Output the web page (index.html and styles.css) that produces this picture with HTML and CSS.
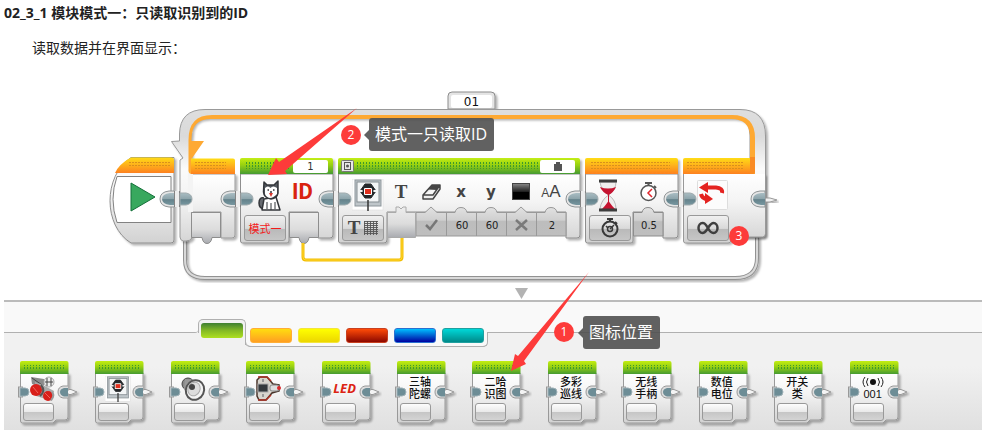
FILE: index.html
```html
<!DOCTYPE html>
<html lang="zh-CN">
<head>
<meta charset="UTF-8">
<meta name="viewport" content="width=device-width, initial-scale=1.0">
<title>模块模式一</title>
<link rel="stylesheet" href="styles.css">
</head>
<body>

<!-- Shared shapes -->
<svg class="defs" width="0" height="0" aria-hidden="true">
  <defs>
    <linearGradient id="green" x1="0" y1="0" x2="0" y2="1">
      <stop offset="0" stop-color="#c4ee12"/><stop offset=".45" stop-color="#96d011"/><stop offset="1" stop-color="#459a32"/>
    </linearGradient>
    <linearGradient id="orange" x1="0" y1="0" x2="0" y2="1">
      <stop offset="0" stop-color="#ffdc16"/><stop offset="1" stop-color="#fd8120"/>
    </linearGradient>
    <linearGradient id="body" x1="0" y1="0" x2="0" y2="1">
      <stop offset="0" stop-color="#ffffff"/><stop offset=".4" stop-color="#f4f4f4"/><stop offset="1" stop-color="#d2d2d2"/>
    </linearGradient>
    <linearGradient id="frame" gradientUnits="userSpaceOnUse" x1="0" y1="110" x2="0" y2="241">
      <stop offset="0" stop-color="#dedede"/><stop offset=".2" stop-color="#dadada"/><stop offset=".45" stop-color="#fbfbfb"/><stop offset=".7" stop-color="#f2f2f2"/><stop offset="1" stop-color="#d6d6d6"/>
    </linearGradient>
    <linearGradient id="slot" x1="0" y1="0" x2="0" y2="1">
      <stop offset="0" stop-color="#ededed"/><stop offset=".55" stop-color="#dcdcdc"/><stop offset="1" stop-color="#a9abb0"/>
    </linearGradient>
    <linearGradient id="field" x1="0" y1="0" x2="0" y2="1">
      <stop offset="0" stop-color="#e2e2e2"/><stop offset=".45" stop-color="#cfcfcf"/><stop offset=".5" stop-color="#bdbdbd"/><stop offset="1" stop-color="#bebebe"/>
    </linearGradient>
    <linearGradient id="teal" x1="0" y1="0" x2="0" y2="1">
      <stop offset="0" stop-color="#a9bdc3"/><stop offset=".5" stop-color="#8ca3aa"/><stop offset=".55" stop-color="#64828b"/><stop offset="1" stop-color="#7797a0"/>
    </linearGradient>
    <linearGradient id="dark" x1="0" y1="0" x2="0" y2="1">
      <stop offset="0" stop-color="#8a8a8a"/><stop offset=".5" stop-color="#222"/><stop offset=".55" stop-color="#000"/><stop offset="1" stop-color="#000"/>
    </linearGradient>
    <pattern id="dots-green" width="3" height="3" patternUnits="userSpaceOnUse"><rect width="1" height="2" fill="#3e9a2c"/></pattern>
    <pattern id="dots-orange" width="3" height="3" patternUnits="userSpaceOnUse"><rect width="2" height="1" fill="#d9901c"/></pattern>
    <filter id="shadow" x="-5%" y="-5%" width="115%" height="115%">
      <feDropShadow dx="2" dy="2" stdDeviation="1" flood-color="#000" flood-opacity=".3"/>
    </filter>

    <symbol id="joint" viewBox="0 0 34 18">
      <path d="M15 1H10Q1 2 1 9Q1 16 10 17H15" fill="#e6e6e6" stroke="#8f9496"/>
      <path d="M15 3H11Q3 4 3 9Q3 14 11 15H15Z" fill="url(#teal)"/>
      <rect x="15" y="1" width="5" height="16" fill="#ededed"/>
      <path d="M15.500 1V17M20.500 1V17" stroke="#838383"/>
      <path d="M21 3H27Q33 4 33 9Q33 14 27 15H21Z" fill="url(#teal)" stroke="#a0abae"/>
    </symbol>

    <symbol id="screen" viewBox="0 0 32 32">
      <rect x="0" y="0" width="31" height="31" fill="#fff" stroke="#ddd" stroke-width=".6"/>
      <rect x="3" y="1" width="26" height="26" fill="#bfc6ca" stroke="#8d969b"/>
      <rect x="5" y="3" width="22" height="20" fill="#f3f5f6" stroke="#858d92"/>
      <path d="M8 12L13 5H19L24 12L19 19H13Z" fill="#25282b" stroke="#25282b" stroke-linejoin="round"/>
      <path d="M7 12H25" stroke="#f3f5f6" stroke-width="2"/>
      <circle cx="16" cy="12" r="5.500" fill="#25282b"/>
      <rect x="12" y="9" width="8" height="7" rx="1" fill="#fff"/>
      <rect x="13" y="10" width="6" height="5" fill="#e0301e"/>
      <path d="M16 21V32" stroke="#333" stroke-width="1.500"/>
    </symbol>

    <symbol id="tile" viewBox="0 0 62 66">
      <g filter="url(#shadow)">
        <path d="M2.500 12V60q0 2 2 2H35l3-3H47q3 0 3-3V12Z" fill="url(#body)" stroke="#999"/>
        <path d="M48 31l3-2.500H53L59 31L53 33.500H51Z" fill="#f4f4f4" stroke="#999"/>
      </g>
      <path d="M2 13V2q0-2 2-2H48.500q2 0 2 2V13Z" fill="url(#green)"/>
      <rect x="6" y="4" width="40" height="5" fill="url(#dots-green)"/>
      <rect x=".5" y="26" width="4" height="10" fill="#ddd" stroke="#999"/>
      <path d="M2 27H7Q11 27 11 31Q11 35 7 35H2Z" fill="#6d8d96" stroke="#9fb1b7"/>
      <path d="M50 25H45Q40 26 40 31Q40 36 45 37H50" fill="#ddd" stroke="#999"/>
      <path d="M50 27H46Q42 28 42 31Q42 34 46 35.500H50Z" fill="#6d8d96"/>
    </symbol>
  </defs>
</svg>

<h4>02_3_1 模块模式一：只读取识别到的ID</h4>
<p class="intro">读取数据并在界面显示：</p>

<figure class="editor">

  <!-- Program canvas -->
  <div class="program">
    <svg class="drawing" viewBox="100 80 690 220" aria-hidden="true">
      <!-- loop frame -->
      <g filter="url(#shadow)">
        <path d="M185 238V260Q185 278 205 278H735Q757 278 757 258V236" fill="none" stroke="#929292" stroke-width="4"/>
      </g>
      <path d="M185 238V260Q185 278 205 278H735Q757 278 757 258V236" fill="none" stroke="#d9d9d9" stroke-width="2"/>
      <g filter="url(#shadow)">
        <path d="M448 109V96q0-4 4-4H491q4 0 4 4V109Z" fill="#e4e4e4" stroke="#8c8c8c"/>
        <path d="M179.500 141V134Q180 109.500 205 109.500H740Q765.500 109.500 765.500 136V234q0 3-3 3H728V174H750V135Q750 118 734 118H208Q191 118 191 137V212H192V238Q190 241 186 241H183Q180 240 180 237V160L183 158L171.500 141.500Z" fill="url(#frame)" stroke="#999"/>
      </g>
      <path d="M191 174H235V235q0 3-3 3H221V212H191Z" fill="url(#body)" stroke="#999" filter="url(#shadow)"/>
      <path d="M188 169V212H193V169Z" fill="#f4f4f4"/>
      <path d="M188.500 171V140Q188.500 115 212 115H732Q755 115 755 138V174H750V137Q750 119 731 119H211Q191.500 119 191.500 139V141H204L191.500 159V174Q189 174 188.500 171Z" fill="#fea933"/>
      <path d="M191 174V158.500H233q2 0 2 2V174Z" fill="url(#orange)"/>
      <rect x="195" y="162" width="31" height="8" fill="url(#dots-orange)"/>

      <!-- start block -->
      <path d="M174 157.500H131C103 176 103 226 131 243H171q3 0 3-3Z" fill="url(#body)" stroke="#8e8e8e" filter="url(#shadow)"/>
      <path d="M174 173V160q0-2.500-3-2.500H131Q119 164 115 173Z" fill="url(#orange)"/>
      <path d="M117 176.500H171V222.500H117Q109 199 117 176.500Z" fill="#fff" stroke="#828282"/>
      <rect x="128" y="161" width="42" height="7" fill="url(#dots-orange)"/>
      <path d="M131 183L155 197L131 211Z" fill="#38a85e" stroke="#14703a"/>

      <!-- module block -->
      <g filter="url(#shadow)">
        <path d="M240.500 174V241q0 2 2 2H287q2 0 2-2V212H318V238H330q3 0 3-3V174Z" fill="url(#body)" stroke="#8e8e8e"/>
        <path d="M240 174V160q0-2 2-2H331q2 0 2 2V174Z" fill="url(#green)"/>
      </g>
      <rect x="244" y="162" width="47" height="7" fill="url(#dots-green)"/>
      <path d="M289.500 212.500H318.500V237.500H309q-1 6-5 6t-5-6H289.500Z" fill="url(#slot)" stroke="#8d8d8d"/>
      <path d="M191.500 212.500H220.500V237.500H212q-1 6-5 6t-5-6H191.500Z" fill="url(#slot)" stroke="#8d8d8d"/>
      <!-- husky -->
      <g stroke="#33363a" stroke-linejoin="round">
        <path d="M264 198q-5-1-5 5t6 6" fill="#666a70" stroke-width="1.500"/>
        <path d="M264 199L262 210H280L276 197Z" fill="#fff" stroke-width="1.500"/>
        <path d="M264 182L267 185H274L278 181V193Q277 198 271 199Q264 198 263.500 192Z" fill="#555a61" stroke-width="1.500"/>
        <path d="M265 188Q268 185 270.500 188Q273 185 277 188V194Q273 198 270 198Q266 197 265 194Z" fill="#fff" stroke="none"/>
        <path d="M269 193H273L271 197Z" fill="#d93a32" stroke="none"/>
        <path d="M267 202V209M271 203V210M275 202V209" fill="none"/>
        <path d="M267.500 190h1.500M273 190h1.500M270 192h2" stroke-width="1.500"/>
      </g>

      <!-- display block -->
      <g filter="url(#shadow)">
        <path d="M338.500 174V241q0 2 2 2H384q3 0 3-3V212H566V238H577q3 0 3-3V174Z" fill="url(#body)" stroke="#8e8e8e"/>
        <path d="M338 174V160q0-2 2-2H578q2 0 2 2V174Z" fill="url(#green)"/>
      </g>
      <rect x="356" y="162" width="182" height="7" fill="url(#dots-green)"/>
      <rect x="341.500" y="160.500" width="12" height="11" rx="1" fill="#e8e8e8" stroke="#777"/>
      <rect x="344.500" y="162.500" width="6" height="7" fill="none" stroke="#555"/>
      <circle cx="347.500" cy="166" r="1.500" fill="#555"/>
      <path d="M416 212.500H425L431 207L437 212.500H455Q456 207.500 461 207.500T467 212.500H485Q486 207.500 491 207.500T497 212.500H515L521 207L527 212.500H545Q546 207.500 551 207.500T557 212.500H566V236H416Z" fill="url(#field)" stroke="#999"/>
      <path d="M446.500 213V236M476.500 213V236M506.500 213V236M536.500 213V236" stroke="#999"/>
      <path d="M387.500 212.500H396V207H399L401 209L403 207H406V212.500H415.500V237.500H387.500Z" fill="url(#slot)" stroke="#aaa"/>
      <use href="#screen" x="352" y="179" width="32" height="32"/>
      <path d="M423 195L432 185H440L433 195ZM423 195V199H433L440 189V185" fill="#eee" stroke="#454545" stroke-width="1.500" stroke-linejoin="round"/>
      <path d="M428 189.500L432 185H440L436.500 190Z" fill="#454545"/>
      <rect x="512.500" y="183.500" width="17" height="16" fill="url(#dark)" stroke="#444"/>
      <path d="M426 225L430 229L437 220" fill="none" stroke="#777" stroke-width="2.500"/>
      <path d="M516 220L527 230M527 220L516 230" fill="none" stroke="#7a7a7a" stroke-width="2.500"/>

      <!-- wait block -->
      <g filter="url(#shadow)">
        <path d="M585.500 174V241q0 2 2 2H631q2 0 2-2V212H663V238H675q3 0 3-3V174Z" fill="url(#body)" stroke="#8e8e8e"/>
        <path d="M585 174V160q0-2 2-2H676q2 0 2 2V174Z" fill="url(#orange)"/>
      </g>
      <rect x="590" y="162" width="80" height="7" fill="url(#dots-orange)"/>
      <path d="M633.500 212.500H642Q643 207.500 648 207.500T654 212.500H663V236H633.500Z" fill="url(#field)" stroke="#8d8d8d"/>
      <path d="M600 182H616Q616 190 608.500 195Q601 190 600 182ZM608.500 195Q616 200 616 209H600Q601 200 608.500 195Z" fill="#f0eeee" stroke="#bbb"/>
      <path d="M600 187Q608 190 616 187Q614 192 608.500 195Q602 192 600 187ZM602 209Q605 206 608.500 201Q612 206 615 209Z" fill="#c51431"/>
      <path d="M608.500 194V202" stroke="#c51431"/>
      <path d="M599 181H617M599 210H617" stroke="#3d3d3d" stroke-width="3"/>
      <circle cx="648.500" cy="193" r="7.500" fill="#fff" stroke="#555" stroke-width="1.500"/>
      <path d="M645 183H652M648.500 183V186M654 186L656 188" stroke="#555" stroke-width="2"/>
      <path d="M652 189L648 193L652 197" fill="none" stroke="#e0252c" stroke-width="1.500"/>

      <!-- loop end block -->
      <path d="M683.500 174H765V234q0 3-3 3H731V240q0 3-3 3H685.500q-2 0-2-2Z" fill="url(#body)" filter="url(#shadow)"/>
      <path d="M683.500 174V241q0 2 2 2H728q3 0 3-3V237H762.500q3 0 3-3V135" fill="none" stroke="#999"/>
      <path d="M683 174V160q0-2 2-2H750V174Z" fill="url(#orange)"/>
      <path d="M750 157H755V172q0 2-2 2H750Z" fill="#f98b24"/>
      <rect x="687" y="162" width="57" height="7" fill="url(#dots-orange)"/>
      <rect x="697.500" y="180.500" width="30" height="29" rx="1" fill="#fcfcfc" stroke="#ddd"/>
      <path d="M706 187.500H716Q723 188 722 193" fill="none" stroke="#e42320" stroke-width="4"/>
      <path d="M699 187.500L708 182V193Z" fill="#e42320"/>
      <path d="M701 194Q702 199 708 199" fill="none" stroke="#e42320" stroke-width="4"/>
      <path d="M713 199L705 193V204Z" fill="#e42320"/>
      <path d="M765 198H770L777 200L770 202H765Z" fill="#f1f1f1" stroke="#999" filter="url(#shadow)"/>

      <!-- joints between blocks -->
      <use href="#joint" x="159" y="190" width="34" height="18"/>
      <use href="#joint" x="220" y="190" width="34" height="18"/>
      <use href="#joint" x="318" y="190" width="34" height="18"/>
      <use href="#joint" x="565" y="190" width="34" height="18"/>
      <use href="#joint" x="663" y="190" width="34" height="18"/>
      <path d="M765 191H760Q751 192 751 199Q751 206 760 207H765Z" fill="#e6e6e6" stroke="#8f9496"/>
      <path d="M765 193H761Q753 194 753 199Q753 204 761 205H765Z" fill="url(#teal)"/>

      <!-- data wire -->
      <path d="M303 243V257Q303 260 306 260H399Q402 260 402 257V238" fill="none" stroke="#f2bd00" stroke-width="3"/>
      <path d="M303 243V257Q303 260 306 260H399Q402 260 402 257V238" fill="none" stroke="#ffd530"/>
    </svg>

    <input class="loop-name" type="text" value="01" aria-label="循环名称">

    <div class="block module">
      <div class="head"><input class="port" type="text" value="1" aria-label="端口"></div>
      <div class="labels"><b class="id">ID</b></div>
      <div class="params">
        <button type="button" class="mode red">模式一</button>
      </div>
    </div>

    <div class="block display">
      <div class="head">
        <button type="button" class="port" aria-label="文本">
          <svg width="10" height="9" viewBox="0 0 10 9"><path d="M1 2H3V0H7V2H9V9H1Z" fill="#555"/></svg>
        </button>
      </div>
      <div class="labels">
        <b class="serif">T</b><b></b><b>x</b><b>y</b><b></b><span><small>A</small>A</span>
      </div>
      <div class="params">
        <button type="button" class="mode" aria-label="文本网格">
          <b>T</b>
          <svg width="14" height="14" viewBox="0 0 14 14"><path d="M0 .5H14M0 2.500H14M0 4.500H14M0 6.500H14M0 8.500H14M0 10.500H14M0 12.500H14M.5 0V14M3.500 0V14M6.500 0V14M9.500 0V14M12.500 0V14" stroke="#555" stroke-width=".9"/></svg>
        </button>
        <input class="x" type="text" value="60" aria-label="x">
        <input type="text" value="60" aria-label="y">
        <input class="size" type="text" value="2" aria-label="字号">
      </div>
    </div>

    <div class="block wait">
      <div class="head"></div>
      <div class="labels"></div>
      <div class="params">
        <button type="button" class="mode" aria-label="时间">
          <svg width="20" height="22" viewBox="0 0 20 22" fill="none" stroke="#383838">
            <circle cx="10" cy="12" r="7.500" stroke-width="2"/><path d="M7 2H13M10 2V5M15 5L17 7" stroke-width="2"/><circle cx="10" cy="12" r="2.500" stroke-width="1.500"/><path d="M10 12L14 8M6 9L8 11" stroke-width="1.500"/>
          </svg>
        </button>
        <input type="text" value="0.5" aria-label="秒">
      </div>
    </div>

    <div class="block loop-end">
      <div class="head"></div>
      <div class="labels"></div>
      <div class="params">
        <button type="button" class="mode" aria-label="无限">
          <svg width="22" height="14" viewBox="0 0 22 14"><path d="M11 7C8 2 7 2 5.500 2A4 5 0 0 0 5.500 12C8 12 9 10 11 7S14 2 16.500 2A4 5 0 0 1 16.500 12C14 12 13 11 11 7Z" fill="none" stroke="#3f3f3f" stroke-width="2.500"/></svg>
        </button>
      </div>
    </div>
  </div>

  <!-- Block palette -->
  <div class="palette">
    <div class="tabs">
      <div class="rail"></div>
      <button type="button" class="tab active" aria-label="动作"></button>
      <div class="tab-group">
        <button type="button" class="tab flow" aria-label="流程"></button>
        <button type="button" class="tab sensor" aria-label="传感器"></button>
        <button type="button" class="tab data" aria-label="数据"></button>
        <button type="button" class="tab advanced" aria-label="高级"></button>
        <button type="button" class="tab custom" aria-label="我的模块"></button>
      </div>
      <div class="rail rest"></div>
    </div>

    <ul class="tiles">
      <li class="tile">
        <svg class="frame"><use href="#tile"/></svg>
        <svg class="icon" viewBox="0 0 26 26">
          <path d="M1 1L14 3V12L2 8Z" fill="#8b8b8b"/><path d="M2 2L12 9" stroke="#444"/>
          <circle cx="19" cy="6" r="5" fill="#eee" stroke="#aaa"/><path d="M17 2V10M21 2V10M15 6H23" stroke="#444"/>
          <path d="M5 6L13 9L24 15L22 25L6 20Z" fill="#aaa"/>
          <circle cx="6" cy="14" r="6" fill="#d81f1a"/><path d="M11 9Q16 15 10 20" stroke="#555" stroke-width="2" fill="none"/>
          <circle cx="18" cy="20" r="5" fill="#d81f1a"/><path d="M22 16Q25 20 21 24" stroke="#999" stroke-width="2" fill="none"/>
          <path d="M3 11L8 17M15 17L20 22" stroke="#f2655c"/>
        </svg>
        <button type="button" class="mode" aria-label="中型电机"></button>
      </li>
      <li class="tile">
        <svg class="frame"><use href="#tile"/></svg>
        <svg class="icon" viewBox="0 0 26 26"><use href="#screen" width="26" height="26"/></svg>
        <button type="button" class="mode" aria-label="显示"></button>
      </li>
      <li class="tile">
        <svg class="frame"><use href="#tile"/></svg>
        <svg class="icon" viewBox="0 0 26 26">
          <circle cx="7" cy="8" r="6" fill="#888" stroke="#444"/><path d="M4 3L17 4L11 22L3 13Z" fill="#999"/>
          <ellipse cx="14" cy="14" rx="9" ry="10" transform="rotate(25 14 14)" fill="#f4f4f4" stroke="#555" stroke-width="2"/>
          <ellipse cx="13" cy="13" rx="6" ry="7" transform="rotate(25 13 13)" fill="#ddd" stroke="#aaa"/><circle cx="11" cy="11" r="3" fill="#444"/>
        </svg>
        <button type="button" class="mode" aria-label="声音"></button>
      </li>
      <li class="tile">
        <svg class="frame"><use href="#tile"/></svg>
        <svg class="icon" viewBox="0 0 26 26">
          <path d="M4 1H11L17 8L23 9V15L16 17L10 24H3L1 20V4Z" fill="#d8d5ce" stroke="#49362c" stroke-width="1.500"/>
          <path d="M2 1H11L15 5M2 24H10L15 19" fill="none" stroke="#ad3225" stroke-width="1.500"/>
          <rect x="2" y="8" width="10" height="8" fill="#353a3e" stroke="#aaa"/><path d="M7 3V6M7 18V21" stroke="#999" stroke-width="2"/>
          <rect x="14" y="9" width="9" height="6" rx="2" fill="#ddd" stroke="#888"/><circle cx="23" cy="12" r="2" fill="#d72b2d"/>
        </svg>
        <button type="button" class="mode" aria-label="程序块状态灯"></button>
      </li>
      <li class="tile">
        <svg class="frame"><use href="#tile"/></svg>
        <span class="label led">LED</span>
        <button type="button" class="mode" aria-label="LED"></button>
      </li>
      <li class="tile">
        <svg class="frame"><use href="#tile"/></svg>
        <span class="label">三轴<br>陀螺</span>
        <button type="button" class="mode" aria-label="三轴陀螺"></button>
      </li>
      <li class="tile">
        <svg class="frame"><use href="#tile"/></svg>
        <span class="label">二哈<br>识图</span>
        <button type="button" class="mode" aria-label="二哈识图"></button>
      </li>
      <li class="tile">
        <svg class="frame"><use href="#tile"/></svg>
        <span class="label">多彩<br>巡线</span>
        <button type="button" class="mode" aria-label="多彩巡线"></button>
      </li>
      <li class="tile">
        <svg class="frame"><use href="#tile"/></svg>
        <span class="label">无线<br>手柄</span>
        <button type="button" class="mode" aria-label="无线手柄"></button>
      </li>
      <li class="tile">
        <svg class="frame"><use href="#tile"/></svg>
        <span class="label">数值<br>电位</span>
        <button type="button" class="mode" aria-label="数值电位"></button>
      </li>
      <li class="tile">
        <svg class="frame"><use href="#tile"/></svg>
        <span class="label">开关<br>类</span>
        <button type="button" class="mode" aria-label="开关类"></button>
      </li>
      <li class="tile">
        <svg class="frame"><use href="#tile"/></svg>
        <span class="label">
          <svg width="22" height="12" viewBox="0 0 22 12"><circle cx="11" cy="6" r="3" fill="#111"/><path d="M6 2Q3 6 6 10M3 1Q-1 6 3 11M16 2Q19 6 16 10M19 1Q23 6 19 11" fill="none" stroke="#222"/></svg>
          001
        </span>
        <button type="button" class="mode" aria-label="无线 001"></button>
      </li>
    </ul>
  </div>

  <!-- Annotations -->
  <svg class="arrows" viewBox="100 80 690 300" aria-hidden="true">
    <path d="M515 288H528L521.500 299Z" fill="#b3b3b3"/>
    <path d="M357 108L285 171L287 174L268 175L276 158L279 162Z" fill="#fd3b3a"/>
    <path d="M589 272L524 361L526 364L511 371L515 354L518 356Z" fill="#fd3b3a"/>
  </svg>
  <span class="badge badge-2">2</span>
  <span class="note note-2">模式一只读取ID</span>
  <span class="badge badge-1">1</span>
  <span class="note note-1">图标位置</span>
  <span class="badge badge-3">3</span>
</figure>

</body>
</html>
```
FILE: styles.css
```css
* {
  box-sizing: border-box;
}

body {
  margin: 0;
  background: #fff;
  color: #222;
  font-family: "Open Sans", "Noto Sans CJK SC", sans-serif;
  font-size: 14px;
}

button,
input {
  margin: 0;
  padding: 0;
  font-family: "DejaVu Sans", "Noto Sans CJK SC", sans-serif;
}

.defs {
  position: absolute;
}

h4 {
  margin: 0;
  padding: 3px 4px;
  font-size: 14px;
  line-height: 20px;
}

.intro {
  margin: 0;
  padding: 11px 32px;
  line-height: 22px;
}

/* Editor */
.editor {
  position: relative;
  margin: 0;
}

.program {
  position: relative;
  height: 230px;
}

.drawing,
.arrows {
  position: absolute;
  top: 10px;
  left: 100px;
  width: 690px;
}

.arrows {
  height: 300px;
  pointer-events: none;
}

.loop-name {
  position: absolute;
  top: 25px;
  left: 451px;
  width: 41px;
  height: 13px;
  border: 0;
  border-radius: 2px;
  background: #fff;
  color: #111;
  font-size: 12px;
  text-align: center;
}

/* Blocks on the canvas */
.block {
  position: absolute;
  top: 87px;
}

.module {
  left: 240px;
  width: 93px;
}

.display {
  left: 338px;
  width: 242px;
}

.wait {
  left: 585px;
  width: 93px;
}

.loop-end {
  left: 683px;
  width: 82px;
}

.head {
  display: flex;
  justify-content: flex-end;
  height: 17px;
  padding: 3px 5px 1px;
}

.port {
  display: flex;
  align-items: center;
  justify-content: center;
  width: 35px;
  height: 13px;
  border: 0;
  border-radius: 2px;
  background: #fff;
  color: #333;
  font-size: 10px;
  text-align: center;
}

.labels {
  display: flex;
  align-items: center;
  height: 38px;
  padding-bottom: 3px;
  color: #444;
  font-family: "DejaVu Sans", sans-serif;
  font-size: 15px;
}

.labels .id {
  margin-left: 52px;
  color: #d9230f;
  font-family: Roboto, sans-serif;
  font-size: 22px;
}

.display .labels {
  padding-left: 48px;
}

.display .labels > * {
  width: 30px;
  text-align: center;
}

.display .labels span {
  font-family: "Liberation Sans", sans-serif;
  font-size: 17px;
}

.labels small {
  font-size: 12px;
}

.labels .serif,
.mode b {
  font-family: "Liberation Serif", serif;
  font-size: 19px;
}

.params {
  display: flex;
  align-items: flex-end;
  height: 29px;
  padding-left: 4px;
}

.params input {
  width: 30px;
  height: 26px;
  align-self: flex-start;
  border: 0;
  background: none;
  color: #222;
  font-size: 10px;
  text-align: center;
}

.params .x {
  margin-left: 63px;
}

.params .size {
  margin-left: 30px;
}

.wait .params input {
  margin-left: 3px;
}

.mode {
  display: flex;
  align-items: center;
  justify-content: center;
  gap: 4px;
  width: 42px;
  height: 26px;
  border: 1px solid #999;
  border-radius: 3px;
  background: linear-gradient(#f0f0f0, #d9d9d9 52%, #b9b9b9 53%, #c6c6c6);
  color: #444;
}

.mode.red {
  color: #f21b1b;
  font-size: 11px;
}

/* Palette */
.palette {
  margin: 0 4px;
  border-top: 2px solid #bbb;
  background: linear-gradient(#f1f1f1 50%, #e0e0e0);
}

.tabs {
  display: flex;
  height: 45px;
  background: linear-gradient(#f9f9f9 21px, transparent 21px);
}

.rail {
  flex: 0 0 194px;
  height: 31px;
  border-bottom: 1px solid #b0b0b0;
  border-bottom-right-radius: 3px;
  background: #f9f9f9;
}

.rail.rest {
  flex: 1;
  border-bottom-right-radius: 0;
}

.tab {
  width: 42px;
  height: 15px;
  border: 1px solid #fff;
  border-radius: 3px;
}

.tab.active {
  position: relative;
  width: 48px;
  height: 26px;
  margin-top: 17px;
  border: 1px solid #b0b0b0;
  border-bottom: 0;
  border-radius: 5px 5px 0 0;
  background: #f1f1f1;
}

.tab.active::before {
  content: "";
  position: absolute;
  top: 3px;
  left: 2px;
  width: 42px;
  height: 15px;
  border-radius: 3px;
  background: linear-gradient(#3e7f31, #83b925 50%, #aee020);
}

/* hides the side line below the rail */
.tab.active::after {
  content: "";
  position: absolute;
  top: 13px;
  bottom: 0;
  left: -1px;
  width: 1px;
  background: #f1f1f1;
}

.tab-group {
  position: relative;
  display: flex;
  align-items: flex-end;
  gap: 6px;
  height: 45px;
  padding: 0 4px 3px;
  border-bottom: 1px solid #b0b0b0;
  border-radius: 0 0 5px 5px;
  background: #f9f9f9;
}

/* outline of the tray, only where it hangs below the rail */
.tab-group::after {
  content: "";
  position: absolute;
  top: 30px;
  right: 0;
  bottom: -1px;
  left: -1px;
  border: solid #b0b0b0;
  border-width: 0 1px 1px;
  border-radius: 0 0 5px 5px;
  pointer-events: none;
}

.flow {
  border-color: #ffae35;
  background: linear-gradient(#ffdd10, #ff9e22);
}

.sensor {
  border-color: #f4e53a;
  background: linear-gradient(#ffff00, #ecd600);
}

.data {
  border-color: #c84020;
  background: linear-gradient(#ff4b08, #8c0800);
}

.advanced {
  border-color: #2a70d0;
  background: linear-gradient(#00bfff, #0000a0);
}

.custom {
  border-color: #20a0a0;
  background: linear-gradient(#00d8d8, #008a8a);
}

.tiles {
  display: grid;
  grid-template-columns: repeat(12, 1fr);
  margin: 0;
  padding: 14px 59px 5px 14px;
  list-style: none;
}

.tile {
  position: relative;
  height: 64px;
  padding: 15px 0 0 5px;
}

.frame {
  position: absolute;
  top: 0;
  left: 0;
  width: 62px;
  height: 66px;
}

.icon,
.label {
  position: relative;
  display: block;
  width: 26px;
  height: 26px;
  margin-left: 7px;
}

.label {
  color: #111;
  font-family: "Liberation Sans", "Noto Sans CJK SC", sans-serif;
  font-size: 11px;
  font-weight: 500;
  line-height: 12px;
  text-align: center;
}

.label svg {
  display: block;
  margin: 0 auto;
}

.led {
  color: #dc2413;
  font-family: "Noto Sans", sans-serif;
  font-size: 13px;
  font-style: italic;
  font-weight: bold;
  line-height: 24px;
}

.tile .mode {
  position: relative;
  width: 31px;
  height: 18px;
  margin-top: 1px;
  background: linear-gradient(#fdfdfd, #e8e8e8 52%, #c6c6c6 53%, #d4d4d4);
}

/* Annotations */
.badge {
  position: absolute;
  width: 20px;
  height: 20px;
  border-radius: 50%;
  background: #fd3b3a;
  color: #fff;
  font-size: 12px;
  line-height: 20px;
  text-align: center;
}

.note {
  position: absolute;
  height: 33px;
  padding: 0 7px 0 6px;
  border-radius: 3px;
  background: rgba(80, 80, 80, 0.9);
  color: #fff;
  font-size: 16px;
  line-height: 33px;
  white-space: nowrap;
}

.note::before {
  content: "";
  position: absolute;
  top: 12px;
  left: -5px;
  border: solid transparent;
  border-width: 5px 5px 5px 0;
  border-right-color: rgba(80, 80, 80, 0.9);
}

.badge-2 {
  top: 55px;
  left: 341px;
}

.note-2 {
  top: 48px;
  left: 369px;
}

.badge-1 {
  top: 252px;
  left: 554px;
}

.note-1 {
  top: 246px;
  left: 583px;
}

.badge-3 {
  top: 156px;
  left: 729px;
}
```
